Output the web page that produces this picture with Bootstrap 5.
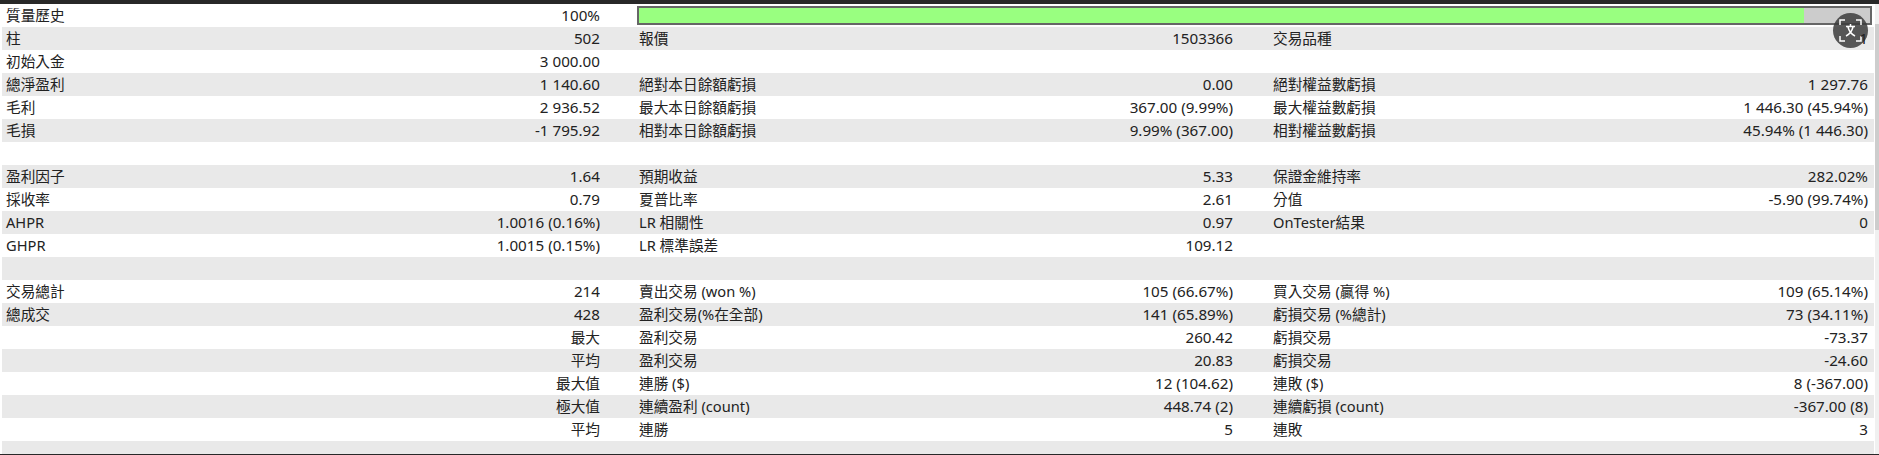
<!DOCTYPE html>
<html lang="zh-Hant">
<head>
<meta charset="utf-8">
<link href="https://cdn.jsdelivr.net/npm/bootstrap@5.3.0/dist/css/bootstrap.min.css" rel="stylesheet">
<style>
html,body{height:100%;overflow:hidden;background:#fff}
body{font-family:"Noto Sans","Noto Sans CJK TC",sans-serif;font-size:14.67px;color:#222}
.shell{height:455px;background:#fff;border-top:4px solid #282828;border-bottom:1px solid #282828}
.gutter{width:2px;flex:none}
.rail{width:4px;flex:none;background:#f0f0f0;margin-left:auto}
.rail-thumb{margin-top:20px;height:206px;background:#cdcdcd}
.report{width:1872px;height:450px;flex:none;table-layout:fixed;border-collapse:collapse;margin:0}
.report tr{height:23px}
.report tr.tail{height:13px}
.report tr:nth-child(even){background:#e9e9e9}
.report td{padding:0;line-height:23px;white-space:nowrap;overflow:hidden}
.cw-a{width:300px}.cw-b{width:298px}.cw-c{width:300px}.cw-d{width:333px}.cw-e{width:300px}.cw-f{width:341px}
.report td.lab1{padding-left:4px}
.report td.lab2{padding-left:39px}
.report td.lab3{padding-left:40px}
.report td.val{text-align:right;font-size:15.2px}
.report td.val3{text-align:right;padding-right:6px;font-size:15.2px}
.report td.val-cjk{font-size:14.67px}
.report td.over-lens{position:relative;z-index:1}
.report td.barcell{padding:0 2px 0 37px}
.track{height:19px;background:#ccc;border:2px solid #666}
.fill{height:100%;background:#99ff80}
.lens{position:absolute;left:1833px;top:9px;width:35px;height:35px;border-radius:50%;background:rgba(60,60,60,.85)}
</style>
</head>
<body>
<div class="shell d-flex position-relative">
  <div class="gutter"></div>
  <table class="report">
    <colgroup><col class="cw-a"><col class="cw-b"><col class="cw-c"><col class="cw-d"><col class="cw-e"><col class="cw-f"></colgroup>
    <tbody>
      <tr><td class="lab1">質量歷史</td><td class="val">100%</td><td class="barcell" colspan="4"><div class="track"><div class="fill" style="width:94.6%"></div></div></td></tr>
      <tr><td class="lab1">柱</td><td class="val">502</td><td class="lab2">報價</td><td class="val">1503366</td><td class="lab3">交易品種</td><td class="val3 over-lens">1</td></tr>
      <tr><td class="lab1">初始入金</td><td class="val">3 000.00</td><td class="lab2"></td><td class="val"></td><td class="lab3"></td><td class="val3"></td></tr>
      <tr><td class="lab1">總淨盈利</td><td class="val">1 140.60</td><td class="lab2">絕對本日餘額虧損</td><td class="val">0.00</td><td class="lab3">絕對權益數虧損</td><td class="val3">1 297.76</td></tr>
      <tr><td class="lab1">毛利</td><td class="val">2 936.52</td><td class="lab2">最大本日餘額虧損</td><td class="val">367.00 (9.99%)</td><td class="lab3">最大權益數虧損</td><td class="val3">1 446.30 (45.94%)</td></tr>
      <tr><td class="lab1">毛損</td><td class="val">-1 795.92</td><td class="lab2">相對本日餘額虧損</td><td class="val">9.99% (367.00)</td><td class="lab3">相對權益數虧損</td><td class="val3">45.94% (1 446.30)</td></tr>
      <tr><td colspan="6"></td></tr>
      <tr><td class="lab1">盈利因子</td><td class="val">1.64</td><td class="lab2">預期收益</td><td class="val">5.33</td><td class="lab3">保證金維持率</td><td class="val3">282.02%</td></tr>
      <tr><td class="lab1">採收率</td><td class="val">0.79</td><td class="lab2">夏普比率</td><td class="val">2.61</td><td class="lab3">分值</td><td class="val3">-5.90 (99.74%)</td></tr>
      <tr><td class="lab1">AHPR</td><td class="val">1.0016 (0.16%)</td><td class="lab2">LR 相關性</td><td class="val">0.97</td><td class="lab3">OnTester結果</td><td class="val3">0</td></tr>
      <tr><td class="lab1">GHPR</td><td class="val">1.0015 (0.15%)</td><td class="lab2">LR 標準誤差</td><td class="val">109.12</td><td class="lab3"></td><td class="val3"></td></tr>
      <tr><td colspan="6"></td></tr>
      <tr><td class="lab1">交易總計</td><td class="val">214</td><td class="lab2">賣出交易 (won %)</td><td class="val">105 (66.67%)</td><td class="lab3">買入交易 (贏得 %)</td><td class="val3">109 (65.14%)</td></tr>
      <tr><td class="lab1">總成交</td><td class="val">428</td><td class="lab2">盈利交易(%在全部)</td><td class="val">141 (65.89%)</td><td class="lab3">虧損交易 (%總計)</td><td class="val3">73 (34.11%)</td></tr>
      <tr><td class="lab1"></td><td class="val val-cjk">最大</td><td class="lab2">盈利交易</td><td class="val">260.42</td><td class="lab3">虧損交易</td><td class="val3">-73.37</td></tr>
      <tr><td class="lab1"></td><td class="val val-cjk">平均</td><td class="lab2">盈利交易</td><td class="val">20.83</td><td class="lab3">虧損交易</td><td class="val3">-24.60</td></tr>
      <tr><td class="lab1"></td><td class="val val-cjk">最大值</td><td class="lab2">連勝 ($)</td><td class="val">12 (104.62)</td><td class="lab3">連敗 ($)</td><td class="val3">8 (-367.00)</td></tr>
      <tr><td class="lab1"></td><td class="val val-cjk">極大值</td><td class="lab2">連續盈利 (count)</td><td class="val">448.74 (2)</td><td class="lab3">連續虧損 (count)</td><td class="val3">-367.00 (8)</td></tr>
      <tr><td class="lab1"></td><td class="val val-cjk">平均</td><td class="lab2">連勝</td><td class="val">5</td><td class="lab3">連敗</td><td class="val3">3</td></tr>
      <tr class="tail"><td colspan="6"></td></tr>
    </tbody>
  </table>
  <div class="rail"><div class="rail-thumb"></div></div>
  <div class="lens d-flex align-items-center justify-content-center">
    <svg width="23" height="23" viewBox="0 0 23 23" fill="none" stroke="#fff" stroke-width="1.5"><path d="M1 6V1H6M17 1H22V6M22 17V22H17M6 22H1V17"/><path d="M7 7.5H16M11.5 5V7.5M9 8C10 12 12 15 16 17M14 8C13 12 11 15 7 17"/></svg>
  </div>
</div>
<script src="https://cdn.jsdelivr.net/npm/bootstrap@5.3.0/dist/js/bootstrap.bundle.min.js"></script>
</body>
</html>
